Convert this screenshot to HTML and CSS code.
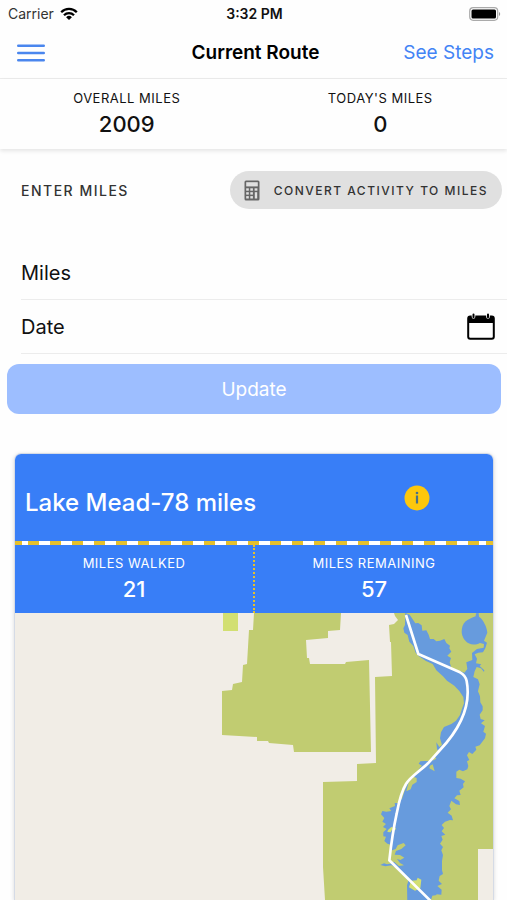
FILE: index.html
```html
<!DOCTYPE html>
<html lang="en">
<head>
    <meta charset="UTF-8">
    <meta name="viewport" content="width=device-width, initial-scale=1.0">
    <title>Current Route</title>
    <link rel="stylesheet" href="styles.css">
</head>
<body>
    <div class="status-bar">
        <div class="carrier">
            <span>Carrier</span>
            <svg width="18" height="14" viewBox="0 0 18 14" fill="none" stroke="#000" stroke-width="2.3">
                <path d="M1.2 5.2a11 11 0 0 1 15.6 0M4 8.2a7.1 7.1 0 0 1 10 0"/>
                <path d="M9 13L6.1 10.2a4.1 4.1 0 0 1 5.8 0z" fill="#000" stroke="none"/>
            </svg>
        </div>
        <span class="time">3:32 PM</span>
        <div class="battery">
            <svg width="32" height="14" viewBox="0 0 32 14">
                <rect x=".7" y=".7" width="28" height="12.6" rx="3.5" fill="#fff" stroke="#aaa" stroke-width="1.2"/>
                <rect x="2.5" y="2.5" width="24.5" height="9" rx="1.5"/>
                <path d="M30 5v4c1.6-.6 1.6-3.4 0-4z" fill="#999"/>
            </svg>
        </div>
    </div>

    <header class="navbar">
        <button type="button" class="menu-button" aria-label="Menu">
            <svg width="28" height="18" viewBox="0 0 28 18" stroke="#4a86ee" stroke-width="2.4" stroke-linecap="round">
                <path d="M1.2 1.8h25.6M1.2 9h25.6M1.2 16.2h25.6"/>
            </svg>
        </button>
        <h1>Current Route</h1>
        <a href="#" class="steps-link">See Steps</a>
    </header>

    <section class="totals">
        <div class="stat">
            <span class="stat-label">OVERALL MILES</span>
            <span class="stat-value">2009</span>
        </div>
        <div class="stat">
            <span class="stat-label">TODAY'S MILES</span>
            <span class="stat-value">0</span>
        </div>
    </section>

    <main>
        <div class="entry-header">
            <h2>ENTER MILES</h2>
            <button type="button" class="convert-button">
                <svg width="16" height="21" viewBox="0 0 16 21">
                    <rect x=".5" y=".5" width="15" height="20" rx="1.5" fill="#666"/>
                    <g fill="#e0e0e0">
                        <rect x="2.2" y="2.2" width="11.6" height="4.2"/>
                        <rect x="2.2" y="8.3" width="2.6" height="2.4"/>
                        <rect x="6.3" y="8.3" width="2.6" height="2.4"/>
                        <rect x="10.6" y="8.3" width="2.8" height="2.4"/>
                        <rect x="2.2" y="12.2" width="2.6" height="2.4"/>
                        <rect x="6.3" y="12.2" width="2.6" height="2.4"/>
                        <rect x="2.2" y="16.1" width="2.6" height="2.4"/>
                        <rect x="6.3" y="16.1" width="2.6" height="2.4"/>
                        <rect x="10.8" y="12.2" width="2.4" height="6.3"/>
                    </g>
                </svg>
                CONVERT ACTIVITY TO MILES
            </button>
        </div>

        <form>
            <div class="field">
                <label for="miles">Miles</label>
                <input type="text" id="miles" name="miles" inputmode="decimal">
            </div>
            <div class="field">
                <label for="date">Date</label>
                <input type="text" id="date" name="date">
                <svg width="28" height="27" viewBox="0 0 28 27">
                    <rect x="1.2" y="3.6" width="25.6" height="22.2" rx="2" fill="#fff" stroke="#000" stroke-width="2"/>
                    <path d="M1 10V4.5l1.5-1.5h23L27 4.5V10z"/>
                    <path d="M6.5 2v2M21 2v2" stroke="#fff" stroke-width="3.6" stroke-linecap="round"/>
                    <path d="M6.5 1.4v2.8M21 1.4v2.8" stroke="#000" stroke-width="2" stroke-linecap="round"/>
                </svg>
            </div>
            <button type="submit" class="update-button">Update</button>
        </form>

        <section class="route-card">
            <div class="route-header">
                <h3>Lake Mead-78 miles</h3>
                <button type="button" class="info-button" aria-label="Route info">
                    <svg width="26" height="26" viewBox="0 0 26 26">
                        <circle cx="13" cy="13" r="12.5" fill="#fdc70c"/>
                        <circle cx="13" cy="8" r="1.3" fill="#4a7088"/>
                        <path d="M13 10.5v8" stroke="#4a7088" stroke-width="2.2"/>
                    </svg>
                </button>
            </div>
            <div class="road"></div>
            <div class="route-stats">
                <div class="stat">
                    <span class="stat-label">MILES WALKED</span>
                    <span class="stat-value">21</span>
                </div>
                <div class="stat">
                    <span class="stat-label">MILES REMAINING</span>
                    <span class="stat-value">57</span>
                </div>
            </div>
            <svg class="map" viewBox="0 0 478 287">
                <rect width="478" height="287" fill="#f1ede6"/>
                <path fill="#d2df72" d="M208 0h15v18h-15z"/>
                <!-- parks -->
                <path fill="#c1cc71" d="M239 0L238 17 234 17 232 51 228 52 227 69 218 71 217 77 207 78 207 122 242 124 242 128 253 128 254 130 278 132 279 139 356 139 354 47 331 49 330 51 295 51 294 45 292 45 291 27 313 25 313 18 325 17 326 0z"/>
                <path fill="#c1cc71" d="M379 0L380 3 383 7 379 11 374 12 375 29 376 29 377 63 360 64 361 150 342 151 342 168 308 169 308 254 310 287 463 287 463 236 478 236 478 0z"/>
                <!-- lake and route, drawn at three times the map scale -->
                <g transform="translate(355 -13) scale(.3333)">
                    <g fill="#679bdd">
                        <path d="M106 39L105 75 100 85 103 98 113 105 118 125 130 138 137 158 146 168 168 183 188 192 199 211 219 229 231 242 253 257 268 273 280 291 282 310 276 326 270 345 258 362 244 372 222 381 213 397 210 415 216 435 208 441 199 427 201 447 206 456 190 475 182 484 164 483 151 484 146 491 156 497 149 505 142 516 130 528 112 552 103 575 96 596 84 609 74 609 75 618 58 625 64 633 49 635 37 633 33 643 43 654 37 665 48 672 39 681 50 687 40 697 40 709 48 710 43 723 52 731 65 735 62 752 77 747 83 736 101 729 107 736 94 747 78 753 74 764 90 765 103 773 91 780 81 777 90 789 102 796 87 798 72 785 61 791 51 793 42 790 31 795 46 799 65 796 79 805 91 817 103 829 116 839 111 856 112 910 206 910 199 883 214 884 215 869 202 858 216 852 206 842 209 828 219 822 216 810 216 783 219 765 214 751 219 741 210 731 218 719 214 708 226 704 215 694 222 684 215 675 225 665 240 660 249 661 245 647 233 638 243 628 238 618 244 602 258 613 270 615 268 603 253 595 261 586 272 585 268 572 281 562 279 552 285 544 272 536 259 534 259 515 268 509 279 514 292 508 295 498 291 484 298 480 291 466 297 456 307 462 319 449 316 440 329 436 345 415 348 401 340 395 345 378 333 370 344 361 332 357 329 344 338 331 338 319 331 307 330 289 324 274 329 253 324 238 310 231 314 214 320 201 333 205 342 216 343 211 329 198 334 193 318 190 321 176 314 163 325 158 339 157 346 145 351 128 342 122 352 98C351 88 348 79 344 72C340 63 334 54 327 50L326 39 318 40 317 49C306 53 296 57 287 64C278 72 275 84 275 96C276 110 284 124 296 130C306 135 318 135 330 129L342 132 341 143 321 147 306 159 307 180 289 187 292 207 283 218 244 203 239 187 243 174 232 167 244 155 238 145 240 137 229 129 223 117 210 122 199 124 191 117 180 117 176 104 169 91 157 92 155 76 145 69 136 70 128 58 119 44z"/>
                        <path fill="#c1cc71" d="M140 534l-10-4-14 17-7 27 13-6 5-14 13-8zM178 505l16 9-6-21-8 4zM188 482l5-14 6 8z"/>
                        <path fill="#d2df72" d="M54 690l10-9 14 4-2 5-11 1-3 6-10-1zM123 842l17-1 3-8 11 6-3 26-16 7-18-10z"/>
                        <path fill="#c1cc71" d="M183 900l4-13 14-2 5 9-3 16h-20z"/>
                    </g>
                    <path d="M108 45L145 162 270 217Q286 225 290 243C305 322 263 394 210 450L174 490C148 515 121 530 108 552C95 573 87 604 80 641C67 701 63 735 58 781L182 903" fill="none" stroke="#fff" stroke-width="8" stroke-linejoin="round"/>
                </g>
            </svg>
        </section>
    </main>
</body>
</html>
```
FILE: styles.css
```css
* {
    box-sizing: border-box;
}
html {
    overflow-x: hidden;
    scrollbar-width: none;
}
body {
    margin: 0;
    font-family: Inter, "Liberation Sans", sans-serif;
    background: #fefefe;
    color: #111;
}
h1, h2, h3 {
    margin: 0;
}
button {
    font-family: inherit;
    border: none;
    padding: 0;
    background: none;
    cursor: pointer;
}
svg {
    display: block;
    flex-shrink: 0;
}
.status-bar {
    display: grid;
    grid-template-columns: 1fr auto 1fr;
    align-items: center;
    height: 27px;
    padding: 0 6px 0 8px;
    font-size: 14px;
}
.carrier {
    display: flex;
    align-items: center;
    gap: 6px;
    color: #333;
}
.time {
    font-weight: 600;
}
.battery {
    justify-self: end;
}
.navbar {
    display: grid;
    grid-template-columns: 1fr auto 1fr;
    align-items: center;
    height: 52px;
    padding: 0 13px 0 17px;
    border-bottom: 1px solid #ececec;
}
.menu-button {
    justify-self: start;
}
.navbar h1 {
    font-size: 19px;
    font-weight: 600;
    color: #000;
}
.steps-link {
    justify-self: end;
    font-size: 19px;
    color: #4384f5;
    text-decoration: none;
}
.totals {
    display: flex;
    height: 70px;
    padding-top: 10px;
    box-shadow: 0 2px 4px rgba(0, 0, 0, 0.1);
}
.stat {
    flex: 1;
    display: flex;
    flex-direction: column;
    align-items: center;
}
.stat-label {
    font-size: 13px;
    line-height: 18px;
    letter-spacing: 0.5px;
}
.stat-value {
    font-size: 22px;
    line-height: 34px;
    font-weight: 500;
}
.entry-header {
    display: flex;
    align-items: center;
    justify-content: space-between;
    padding: 22px 5px 0 21px;
}
.entry-header h2 {
    font-size: 14px;
    font-weight: 500;
    letter-spacing: 1.5px;
    color: #333;
}
.convert-button {
    display: flex;
    align-items: center;
    gap: 14px;
    height: 38px;
    padding: 0 14px;
    border-radius: 20px;
    background: #e0e0e0;
    font-size: 12px;
    font-weight: 500;
    letter-spacing: 1.5px;
    color: #333;
}
form {
    padding-top: 37px;
}
.field {
    display: flex;
    align-items: center;
    gap: 16px;
    height: 54px;
    margin-left: 21px;
    padding-right: 12px;
    border-bottom: 1px solid #ececec;
    font-size: 20px;
}
.field input {
    flex: 1;
    min-width: 0;
    border: none;
    outline: none;
    background: transparent;
    font: inherit;
}
.update-button {
    display: block;
    width: calc(100% - 13px);
    height: 50px;
    margin: 10px 6px 0 7px;
    border-radius: 12px;
    background: #9dbeff;
    color: #fff;
    font-size: 19px;
}
.route-card {
    margin: 39px 13px 0 14px;
    border: 1px solid #d5dbe6;
    border-bottom: none;
    border-radius: 7px 7px 0 0;
    overflow: hidden;
    box-shadow: 0 1px 4px rgba(0, 0, 0, 0.15);
}
.route-header {
    display: flex;
    align-items: center;
    justify-content: space-between;
    height: 87px;
    padding: 0 63px 0 10px;
    background: #387ef7;
    color: #fff;
}
.route-header h3 {
    padding-top: 10px;
    font-size: 24px;
    font-weight: 500;
}
.road {
    height: 4px;
    background:
        linear-gradient(#e5c02d, #e5c02d) left / 7px 100% no-repeat,
        linear-gradient(#e5c02d, #e5c02d) right / 7px 100% no-repeat,
        repeating-linear-gradient(90deg, #e5c02d 0 2px, #fff 2px 13px, #e5c02d 13px 22px);
}
.route-stats {
    display: flex;
    height: 68px;
    background: #387ef7;
    color: #fff;
}
.route-stats .stat {
    padding-top: 9px;
}
.route-stats .stat:first-child {
    border-right: 2px dotted #e5c02d;
}
.map {
    width: 100%;
    height: auto;
}
```
